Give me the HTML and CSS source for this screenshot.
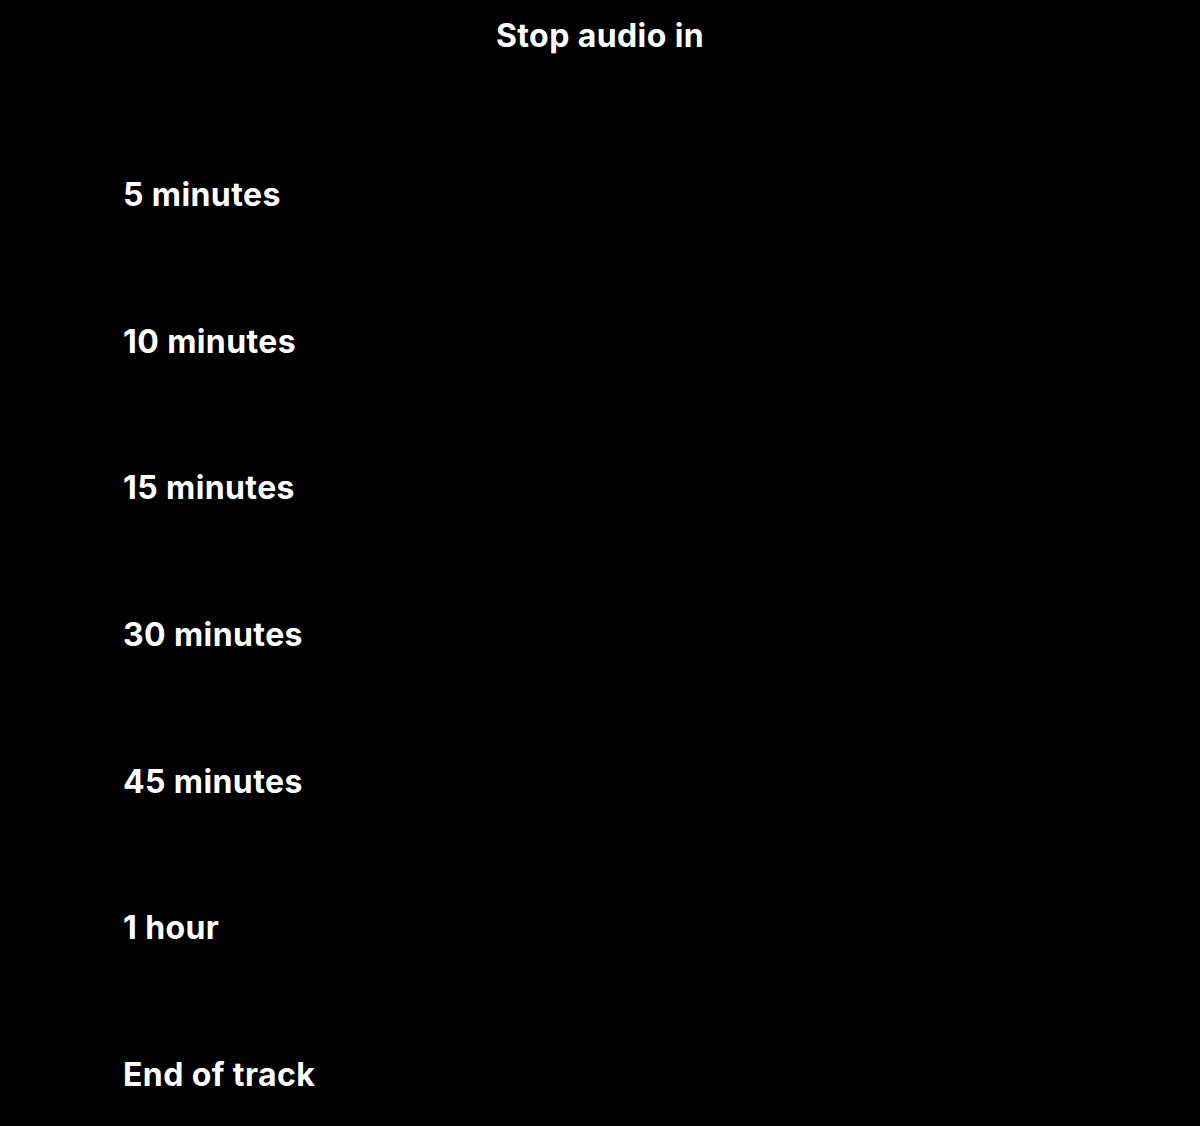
FILE: index.html
```html
<!DOCTYPE html>
<html lang="en">
<head>
    <meta charset="UTF-8">
    <meta name="viewport" content="width=device-width, initial-scale=1.0">
    <title>Sleep timer</title>
    <link rel="stylesheet" href="styles.css">
</head>
<body>
    <div class="sheet">
        <h1 class="sheet-title">Stop audio in</h1>
        <ul class="timer-list">
            <li class="timer-option">5 minutes</li>
            <li class="timer-option">10 minutes</li>
            <li class="timer-option">15 minutes</li>
            <li class="timer-option">30 minutes</li>
            <li class="timer-option">45 minutes</li>
            <li class="timer-option">1 hour</li>
            <li class="timer-option">End of track</li>
        </ul>
    </div>
</body>
</html>
```

FILE: styles.css
```css
html, body {
    margin: 0;
    padding: 0;
    background: #000;
}

body {
    font-family: Inter, "Noto Sans", sans-serif;
    color: #fff;
    height: 1126px;
    overflow: hidden;
}

.sheet {
    display: flex;
    flex-direction: column;
}

.sheet-title {
    margin: 0;
    height: 70px;
    display: flex;
    align-items: center;
    justify-content: center;
    font-size: 32px;
    font-weight: 700;
    letter-spacing: 0.4px;
}

.timer-list {
    list-style: none;
    margin: 0;
    padding: 51px 0 0 123px;
}

.timer-option {
    height: 146.7px;
    display: flex;
    align-items: center;
    font-size: 32px;
    font-weight: 700;
    letter-spacing: 0.4px;
    cursor: pointer;
}
```
